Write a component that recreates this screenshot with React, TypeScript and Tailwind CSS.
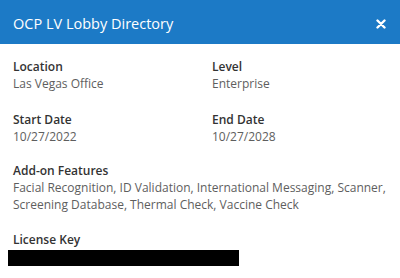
export default function App() {
    return (
        <div className="w-[400px] h-[278px] bg-white overflow-hidden" style={{ fontFamily: '"Open Sans", sans-serif' }}>
            {/* Header */}
            <div className="h-[44px] bg-[#1c7ac6] flex items-center justify-between pt-[3px] px-[13px]">
                <span className="text-white text-[14.5px]">OCP LV Lobby Directory</span>
                <svg width="10" height="10" viewBox="0 0 10 10" className="mr-[1px]">
                    <path d="M1.5 1.5 L8.5 8.5 M8.5 1.5 L1.5 8.5" stroke="white" strokeWidth="2.4" strokeLinecap="round" />
                </svg>
            </div>

            {/* Body */}
            <div className="pt-[14px] px-[13px]">
                <div className="grid grid-cols-[199px_1fr] gap-y-[18px]">
                    <div>
                        <div className="text-[12px] font-semibold text-[#333] leading-[17px]">Location</div>
                        <div className="text-[12px] text-[#5e5e5e] leading-[18px]">Las Vegas Office</div>
                    </div>
                    <div>
                        <div className="text-[12px] font-semibold text-[#333] leading-[17px]">Level</div>
                        <div className="text-[12px] text-[#5e5e5e] leading-[18px]">Enterprise</div>
                    </div>
                    <div>
                        <div className="text-[12px] font-semibold text-[#333] leading-[17px]">Start Date</div>
                        <div className="text-[12px] text-[#5e5e5e] leading-[18px]">10/27/2022</div>
                    </div>
                    <div>
                        <div className="text-[12px] font-semibold text-[#333] leading-[17px]">End Date</div>
                        <div className="text-[12px] text-[#5e5e5e] leading-[18px]">10/27/2028</div>
                    </div>
                </div>

                <div className="mt-[16px]">
                    <div className="text-[12px] font-semibold text-[#333] leading-[17px]">Add-on Features</div>
                    <div className="text-[12px] text-[#5e5e5e] leading-[17px]">
                        Facial Recognition, ID Validation, International Messaging, Scanner, Screening Database, Thermal Check, Vaccine Check
                    </div>
                </div>

                <div className="mt-[18px]">
                    <div className="text-[12px] font-semibold text-[#333] leading-[17px]">License Key</div>
                    <div className="h-[16px] w-[231px] bg-black -ml-[5px] mt-[2px]"></div>
                </div>
            </div>
        </div>
    );
}
